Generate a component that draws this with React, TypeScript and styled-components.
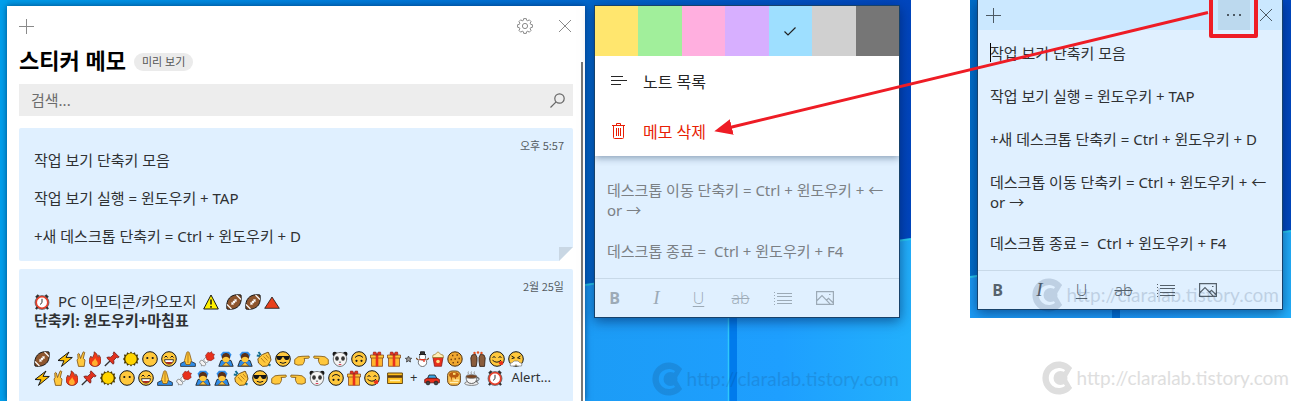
import React from "react";
import styled, { createGlobalStyle, css } from "styled-components";

const Global = createGlobalStyle`
  * { box-sizing: border-box; }
  body {
    margin: 0;
    background: #fff;
    font-family: "Noto Sans", "Noto Sans CJK KR", sans-serif;
    color: #2f3133;
  }
  p, h1 { margin: 0; }
  button, input { font: inherit; color: inherit; }
  svg { display: block; flex: none; }
`;

/* ---------- page ---------- */

const Page = styled.main`
  position: relative;
  display: flex;
  align-items: stretch;
  gap: 59px;
  padding-right: 10px;
  min-width: 1240px;
  overflow: hidden;
`;

const Desktop = styled.section<{ $wide?: boolean }>`
  position: relative;
  display: flex;
  align-items: flex-start;
  overflow: hidden;
  ${(p) =>
    p.$wide
      ? css`
          flex: 1 1 0;
          gap: 9px;
          padding: 6px 11px 0 7px;
        `
      : css`
          padding: 0 8px 8px 7px;
        `}
`;

const RightColumn = styled.div`
  flex: none;
  width: 321px;
  display: flex;
  flex-direction: column;
  gap: 43px;
`;

const Wall = styled.svg`
  position: absolute;
  inset: 0;
  width: 100%;
  height: 100%;
`;

/* ---------- note list window ---------- */

const ListWindow = styled.div`
  position: relative;
  flex: 1 1 0;
  height: 395px;
  overflow: hidden;
  padding: 0 12px;
  background: #fff;
  box-shadow: 0 0 6px rgba(0, 20, 60, 0.6);
`;

const TopBar = styled.div`
  display: flex;
  align-items: center;
  gap: 26px;
  height: 40px;
  padding-right: 2px;
  color: #8a8a8a;
`;

const IconButton = styled.button<{ $push?: boolean }>`
  display: flex;
  align-items: center;
  justify-content: center;
  padding: 0;
  border: 0;
  background: none;
  ${(p) => p.$push && "margin-left: auto;"}
`;

const TitleRow = styled.header`
  display: flex;
  align-items: center;
  gap: 8px;
  height: 28px;
`;

const Title = styled.h1`
  font-size: 22px;
  line-height: 28px;
  font-weight: 700;
  color: #000;
`;

const Pill = styled.span`
  margin-top: 4px;
  padding: 0 8px;
  border-radius: 9px;
  background: #ebebeb;
  color: #555;
  font-size: 11px;
  line-height: 18px;
`;

const Search = styled.label`
  display: flex;
  align-items: center;
  height: 32px;
  margin: 10px 0 12px;
  padding: 0 8px 0 12px;
  background: #ededed;
  color: #666;
`;

const SearchInput = styled.input`
  flex: 1;
  min-width: 0;
  padding: 0;
  border: 0;
  outline: 0;
  background: none;
  font-size: 15px;
  &::placeholder { color: #6c6c6c; opacity: 1; }
`;

const Card = styled.article`
  position: relative;
  height: 133px;
  margin-bottom: 8px;
  padding: 23px 15px;
  border-radius: 2px;
  background: #e0f0ff;
  font-size: 15px;
  line-height: 19px;
`;

const Stamp = styled.time`
  position: absolute;
  top: 8px;
  right: 9px;
  font-family: "Noto Sans CJK KR", sans-serif;
  font-size: 11px;
  line-height: 18px;
  color: #555c62;
`;

const Fold = styled.svg`
  position: absolute;
  right: 0;
  bottom: 0;
`;

const CardLine = styled.p`
  height: 19px;
  white-space: pre;
  & + & { margin-top: 19px; }
`;

const EmojiLine = styled.div<{ $bold?: boolean; $spaced?: boolean }>`
  display: flex;
  align-items: center;
  gap: 7px;
  height: 19px;
  white-space: pre;
  font-weight: ${(p) => (p.$bold ? 700 : 400)};
  ${(p) => p.$spaced && "margin-top: 19px;"}
`;

const EmojiRun = styled.span`
  display: flex;
  align-items: center;
  gap: 3px;
`;

const Preview = styled.span`
  font-size: 13px;
`;

const Thumb = styled.div`
  position: absolute;
  top: 56px;
  right: 2px;
  bottom: 0;
  width: 2px;
  background: #777;
`;

/* ---------- sticky note ---------- */

const Note = styled.article<{ $top?: boolean }>`
  position: relative;
  flex: none;
  width: 306px;
  border: 1px solid #17426b;
  background: #e0f0ff;
  box-shadow: 0 3px 12px rgba(0, 20, 70, 0.55);
  ${(p) => (p.$top ? "border-top: 0;" : "margin-top: -1px;")}
`;

const Swatches = styled.div`
  display: flex;
  height: 50px;
`;

const Swatch = styled.button<{ $color: string }>`
  flex: 1;
  display: flex;
  align-items: center;
  justify-content: center;
  padding: 0;
  border: 0;
  background: ${(p) => p.$color};
`;

const Menu = styled.div`
  position: relative;
  background: #fff;
  box-shadow: 0 2px 7px rgba(30, 60, 90, 0.45);
  clip-path: inset(0 0 -12px 0);
`;

const MenuItem = styled.button<{ $danger?: boolean }>`
  display: flex;
  align-items: center;
  gap: 16px;
  width: 100%;
  height: 50px;
  padding: 0 16px;
  border: 0;
  background: none;
  font-size: 16px;
  color: ${(p) => (p.$danger ? "#e81e05" : "#262626")};
`;

const NoteHeader = styled.header`
  display: flex;
  align-items: center;
  height: 30px;
  padding: 0 10px 0 8px;
  background: #cbe8ff;
  color: #4d5a64;
`;

const MoreButton = styled(IconButton)`
  position: relative;
  width: 32px;
  height: 30px;
  margin: 0 10px 0 auto;
  background: #bcd9ee;
`;

const Highlight = styled.span`
  position: absolute;
  inset: -5px -8px -8px -9px;
  border: 4px solid #ee1c25;
  border-radius: 2px;
`;

const NoteBody = styled.div<{ $dim?: boolean }>`
  position: relative;
  display: flex;
  flex-direction: column;
  gap: 23px;
  padding: ${(p) => (p.$dim ? "24px 12px 17px" : "13px 12px 17px")};
  font-size: 15px;
  line-height: 20px;
  color: ${(p) => (p.$dim ? "#7b8085" : "#2f3133")};
`;

const Para = styled.p<{ $long?: boolean }>`
  white-space: pre;
  margin-bottom: ${(p) => (p.$long ? "-2px" : "0")};
`;

const Caret = styled.i`
  position: absolute;
  left: 12px;
  top: 13px;
  width: 1px;
  height: 19px;
  background: #000;
`;

const Tools = styled.footer<{ $dim?: boolean }>`
  display: flex;
  height: 39px;
  border-top: 1px solid #c8d9e8;
  color: ${(p) => (p.$dim ? "#9caab6" : "#56626c")};
`;

const Tool = styled.button<{ $kind?: "b" | "i" | "u" | "s" }>`
  display: flex;
  align-items: center;
  justify-content: center;
  width: 42px;
  padding: 0 3px 0 0;
  border: 0;
  background: none;
  font-family: "Open Sans", sans-serif;
  font-size: 16px;
  line-height: 20px;
  ${(p) => p.$kind === "b" && `font-weight: 700;`}
  ${(p) => p.$kind === "i" && `font-style: italic; font-family: "Liberation Serif", serif; font-size: 19px;`}
  ${(p) => p.$kind === "u" && `font-weight: 300; text-decoration: underline 1px; text-underline-offset: 2px;`}
  ${(p) => p.$kind === "s" && `font-weight: 300; text-decoration: line-through 1px;`}
`;

/* ---------- overlays ---------- */

const MarkBox = styled.div<{ $at?: "desktop" | "note"; $light?: boolean }>`
  display: flex;
  align-items: center;
  gap: 2px;
  height: 34px;
  pointer-events: none;
  font-family: Lato, sans-serif;
  font-size: 19px;
  line-height: 34px;
  white-space: nowrap;
  color: ${(p) => (p.$light ? "#dedede" : "#14325a")};
  opacity: ${(p) => (p.$light ? 1 : 0.16)};
  ${(p) => p.$at === "desktop" && "position: absolute; right: 12px; bottom: 5px;"}
  ${(p) => p.$at === "note" && "position: absolute; right: 12px; bottom: 6px;"}
  ${(p) => p.$light && "align-self: flex-end; margin-right: 2px;"}
`;

const ArrowLayer = styled.svg`
  position: absolute;
  inset: 0;
  width: 100%;
  height: 100%;
  pointer-events: none;
`;

/* ---------- icons ---------- */

const PlusIcon = () => (
  <svg width="15" height="15" viewBox="0 0 15 15" stroke="currentColor" fill="none">
    <path d="M0 7.5h15M7.5 0v15" />
  </svg>
);

const CloseIcon = () => (
  <svg width="12" height="12" viewBox="0 0 12 12" stroke="currentColor" fill="none">
    <path d="M0 0l12 12M12 0L0 12" />
  </svg>
);

const GearIcon = () => (
  <svg width="16" height="16" viewBox="0 0 16 16" stroke="currentColor" fill="none" strokeLinejoin="round">
    <circle cx="8" cy="8" r="2.6" />
    <path d="M6.7.6h2.6l.3 1.700 1.200.5 1.500-1 1.800 1.900-1 1.400.5 1.200 1.800.4v2.600l-1.800.4-.5 1.200 1 1.400-1.800 1.900-1.500-1-1.200.5-.3 1.700H6.700l-.3-1.700-1.200-.5-1.500 1-1.800-1.900 1-1.400-.5-1.200L.6 9.300V6.700l1.800-.4.5-1.200-1-1.400 1.800-1.900 1.500 1 1.200-.5z" />
  </svg>
);

const SearchIcon = () => (
  <svg width="15" height="15" viewBox="0 0 15 15" stroke="currentColor" fill="none" strokeWidth="1.2">
    <circle cx="9.500" cy="5.500" r="4.700" />
    <path d="M6.100 8.900L.5 14.500" />
  </svg>
);

const CheckIcon = () => (
  <svg width="12" height="9" viewBox="0 0 12 9" stroke="#222" fill="none" strokeWidth="1.2">
    <path d="M.5 4.500L4 8 11.500.5" />
  </svg>
);

const LinesIcon = () => (
  <svg width="16" height="10" viewBox="0 0 16 10" stroke="currentColor" fill="none">
    <path d="M0 .5h12M0 4.500h16M0 8.500h10" />
  </svg>
);

const TrashIcon = () => (
  <svg width="16" height="16" viewBox="0 0 16 16" stroke="currentColor" fill="none">
    <path d="M1 2.500h13M5.500 2.500v-2h4v2M2.500 2.500v12q0 1 1 1h8q1 0 1-1v-12M5.500 5v8M7.500 5v8M9.500 5v8" />
  </svg>
);

const DotsIcon = () => (
  <svg width="14" height="2" viewBox="0 0 14 2" fill="currentColor">
    <path d="M0 0h2v2H0zM6 0h2v2H6zM12 0h2v2h-2z" />
  </svg>
);

const ListIcon = () => (
  <svg width="18" height="13" viewBox="0 0 18 13" stroke="currentColor" fill="none">
    <path d="M3 1.500h15M3 4.500h15M3 8.500h15M3 11.500h15" />
    <path d="M0 .5h1M0 3.500h1M0 6.500h1M0 9.500h1M0 12.500h1" />
  </svg>
);

const ImageIcon = () => (
  <svg width="18" height="14" viewBox="0 0 18 14" stroke="currentColor" fill="none" strokeWidth="1.2">
    <path d="M.6.6h16.800v12.800H.6zM.6 10L6 4.600l8.500 8.800M10.500 9.200l2-1.900 4.900 4.700" />
    <path d="M13 3.500h1.500" />
  </svg>
);

/* ---------- emoji ---------- */

const K = "#161616";
const Y = "#ffc83d";

const Face = ({ children }: { children: React.ReactNode }) => (
  <>
    <circle cx="8" cy="8" r="7.300" fill={Y} stroke={K} />
    {children}
  </>
);

const Bow = () => (
  <>
    <path d="M2.500 3.500L5 .8h6l2.500 2.700L12 7H4z" fill="#2f8be6" />
    <path d="M.8 15.300L3 9.500Q8 7 13 9.500l2.200 5.800z" fill="#2f8be6" stroke={K} strokeWidth=".8" />
    <circle cx="8" cy="7.500" r="3.700" fill={Y} />
    <path d="M4.100 8C3.300 4 5.500 2 8 2s4.700 2 3.900 6Q10 5.800 8 5.800T4.100 8z" fill="#5a3018" />
    <path d="M4.500 14.800L8 11.200l3.500 3.600z" fill={Y} stroke="#8a5000" strokeWidth=".7" />
  </>
);

const HAND =
  "M.7 8.500L4 5.800l4-.5 7-.2q1 1.200-.3 2.100L10 7.500l.7 1.500-.4 1.700-.8 1.800-1 1.300-4.500.4L.7 13z";

type Art = { w: number; art: React.ReactNode };

const EMOJI: Record<string, Art> = {
  clock: {
    w: 17,
    art: (
      <>
        <path d="M2 3.500L4.500 1M14 3.500L11.500 1M3.500 13L2 15.200M12.500 13l1.500 2.200" stroke="#333" strokeWidth="2.200" />
        <circle cx="8" cy="8.500" r="5.900" fill="#fff" stroke="#e8402c" strokeWidth="1.900" />
        <circle cx="8" cy="8.500" r="7" fill="none" stroke={K} strokeWidth=".5" />
        <path d="M8 4.800v3.900l-2 1.800" stroke="#333" fill="none" />
      </>
    ),
  },
  warning: {
    w: 16,
    art: (
      <>
        <path d="M8 1L15.300 15H.7z" fill="#fff100" stroke={K} strokeLinejoin="round" />
        <path d="M8 5.500v5M8 12v1.800" stroke={K} strokeWidth="1.500" />
      </>
    ),
  },
  football: {
    w: 16,
    art: (
      <>
        <path d="M1 15C0 9 2 4 6 2c3-1.500 6-1.500 9-1 .5 4 .3 7-1.500 10C11 14.500 6 16 1 15z" fill="#8e562e" stroke={K} />
        <path d="M1 10.500L5.500 15M10.500 1L15 5.500M5.500 10.500l5-5M5.500 8.500l2 2M7 7l2 2M8.500 5.500l2 2" stroke="#fff" strokeWidth="1.100" />
      </>
    ),
  },
  triangle: { w: 16, art: <path d="M8 3L15.300 14.300H.7z" fill="#e8401c" stroke={K} strokeWidth=".8" /> },
  zap: { w: 16, art: <path d="M12 1L1 9.500l6 .3L4.500 15.400 15.300 6.500 9 6.300z" fill="#ffc000" stroke={K} strokeLinejoin="round" /> },
  victory: {
    w: 10,
    art: (
      <path
        transform="translate(-3 0)"
        d="M5.500 15.400L4 9l1-1.300L4.800 3q.8-1.200 1.600 0L7.500 7.500 10 1.200q1.300-.8 1.700.3L10.300 7.500 12 9l-.8 6.400z"
        fill={Y}
        stroke="#7a4d10"
        strokeWidth=".8"
      />
    ),
  },
  fire: {
    w: 12,
    art: (
      <g transform="translate(-2 0)">
        <path d="M7 .8c4 2 3 4.200 4.300 5.400.6-.6.6-1.400.4-2.300 2.300 2.500 2.500 4.500 2.300 6.600-.4 3-2.800 5-6 5s-5.600-2-6-5c-.1-2.500 1.200-4.200 2-5.500.2 1 .5 1.500 1 2C6.500 5 7.500 3 7 .8z" fill="#f03a17" stroke="#5a1a10" strokeWidth=".6" />
        <path d="M8.200 7c0 2 2.600 3 2.600 5.200 0 1.800-1.200 2.800-2.800 2.800s-3-1-3-2.800C5 10 7.500 9.500 8.200 7z" fill="#ffb030" />
      </g>
    ),
  },
  pin: {
    w: 16,
    art: (
      <>
        <path d="M6 10L.8 15" stroke="#333" strokeWidth="1.300" />
        <path d="M10 .8L15.200 6l-1.500.8-1.200-.3L9.800 9.200l.2 3.200-1 .8L2.800 7l.8-1 3.200.2 2.700-2.700-.3-1.200z" fill="#e0301e" stroke="#5b1310" strokeWidth=".7" />
      </>
    ),
  },
  sun: {
    w: 16,
    art: (
      <>
        <path d="M8 .5l1.700 2 2.200-1.300.7 2.500 2.500-.1-.6 2.500L16 8l-1.500 1.900.6 2.500-2.500-.1-.7 2.500-2.200-1.300L8 15.500l-1.700-2-2.200 1.300-.7-2.500-2.500.1.6-2.500L0 8l1.500-1.900-.6-2.500 2.500.1.700-2.500 2.200 1.300z" fill="#4a3a00" />
        <circle cx="8" cy="8" r="5.700" fill="#ffd500" />
      </>
    ),
  },
  mute: {
    w: 16,
    art: (
      <Face>
        <circle cx="5.300" cy="7" r="1.100" fill={K} />
        <circle cx="10.700" cy="7" r="1.100" fill={K} />
      </Face>
    ),
  },
  laugh: {
    w: 16,
    art: (
      <Face>
        <path d="M3.500 6.500L5 5l1.500 1.500M9.500 6.500L11 5l1.500 1.500" stroke={K} fill="none" />
        <path d="M3.500 8.700h9c-.3 2.800-2 4.300-4.500 4.300s-4.200-1.500-4.500-4.300z" fill="#fff" stroke={K} strokeWidth=".8" />
        <path d="M4.500 11h7c-1 1.500-2 2-3.500 2s-2.700-.5-3.500-2z" fill="#b02a1a" />
      </Face>
    ),
  },
  pray: {
    w: 16,
    art: (
      <>
        <path d="M.6 15.400V12.500L4.500 10.500h7l3.900 2v2.900z" fill="#2f8be6" stroke={K} strokeWidth=".7" />
        <path d="M7.900.8q-1.300 0-1.500 1.700L4.500 9.500 6 13.500h4l1.500-4-1.900-7Q9.400.8 7.900.8z" fill={Y} stroke="#8a5a10" strokeWidth=".8" />
        <path d="M8 2v10" stroke="#a86c10" strokeWidth=".8" />
      </>
    ),
  },
  cracker: {
    w: 16,
    art: (
      <>
        <path d="M1 10l2-1 4 4-1.500 2-1.800-.5L2.500 15l-.3-2L.6 12z" fill="#f3f3f3" stroke="#777" strokeWidth=".7" />
        <path d="M4.500 9l5-6 3.500 3.500L7.500 12z" fill="#fff" stroke="#555" strokeWidth=".6" />
        <path d="M6.500 4.500L9 1.200l2 .8L12.500.6l.8 2 2.300.8L14.500 5l.7 2.500-3.200 2.200L8 9z" fill="#e8301c" stroke="#7a1010" strokeWidth=".5" />
      </>
    ),
  },
  bow: { w: 16, art: <Bow /> },
  clap: {
    w: 16,
    art: (
      <>
        <path d="M.8 4.500L4 5M2.500 1l2.300 3M14.500 14.500l-3-1.500" stroke="#136f91" strokeWidth="2" />
        <path d="M4.500 5l2-1.500L12 1.200q1.500.5.8 1.800l1.200 1.500L15 9l-3.500 6-5 .4L2.500 12 1.800 8z" fill={Y} stroke="#6e4812" strokeWidth=".9" />
        <path d="M5 7l4 4.500M7.500 5.500l4 4M10 4l3 3.500" stroke="#a86c10" strokeWidth=".8" />
      </>
    ),
  },
  cool: {
    w: 16,
    art: (
      <Face>
        <path d="M1.200 5h13.600l-.6 2.500q-.5 1.500-2.300 1.500-2.500 0-3-2.800H7.100Q6.600 9 4.100 9 2.300 9 1.800 7.500z" fill={K} />
        <path d="M4.800 11.300q3.200 2 6.400 0" stroke={K} fill="none" />
      </Face>
    ),
  },
  right: { w: 16, art: <path d={HAND} fill={Y} stroke="#7a5210" strokeWidth=".8" /> },
  left: {
    w: 16,
    art: <path transform="matrix(-1 0 0 1 16 0)" d={HAND} fill={Y} stroke="#7a5210" strokeWidth=".8" />,
  },
  panda: {
    w: 16,
    art: (
      <>
        <circle cx="2.800" cy="3" r="2.300" fill={K} />
        <circle cx="13.200" cy="3" r="2.300" fill={K} />
        <path d="M8 1.500c4.500 0 6.700 3 6.700 6.500S12 15.400 8 15.400 1.300 11.500 1.300 8 3.500 1.500 8 1.500z" fill="#f4f4f4" stroke="#555" strokeWidth=".8" />
        <ellipse cx="5" cy="7.500" rx="1.800" ry="2.200" fill="#333" />
        <ellipse cx="11" cy="7.500" rx="1.800" ry="2.200" fill="#333" />
        <path d="M6.800 10.800h2.400L8 12z" fill={K} />
        <path d="M6.700 13.500h2.600" stroke="#e0405a" />
      </>
    ),
  },
  upside: {
    w: 16,
    art: (
      <Face>
        <circle cx="5.500" cy="9.800" r="1.100" fill={K} />
        <circle cx="10.500" cy="9.800" r="1.100" fill={K} />
        <path d="M4 6.500q4-4 8 0" stroke={K} fill="none" />
      </Face>
    ),
  },
  gift: {
    w: 14,
    art: (
      <g transform="translate(-1 0)">
        <path d="M2.500 6.500h11v8.800h-11z" fill="#ffb52e" stroke="#7a3a10" strokeWidth=".7" />
        <path d="M1.500 4h13v3h-13z" fill="#ffc83d" stroke="#7a3a10" strokeWidth=".7" />
        <path d="M6.700 4h2.600v11.300H6.700z" fill="#e8301c" />
        <path d="M8 4L4 3.500 4.500 1 7 1.200zM8 4l4-.5-.5-2.500L9 1.200z" fill="#e8301c" stroke="#8c1a10" strokeWidth=".6" />
      </g>
    ),
  },
  star: {
    w: 9,
    art: <path transform="translate(-3.500 0)" d="M8 5l.9 2.100 2.300.2-1.700 1.500.5 2.200L8 9.800 6 11l.5-2.200-1.700-1.500 2.300-.2z" fill="#999" stroke="#444" strokeWidth=".9" />,
  },
  snowman: {
    w: 13,
    art: (
      <g transform="translate(-1.500 0)">
        <path d="M1 7l3 2M15 7l-3 2" stroke="#7a4a20" strokeWidth="1.200" />
        <circle cx="8" cy="11.300" r="4.200" fill="#fff" stroke="#555" strokeWidth=".8" />
        <circle cx="8" cy="6" r="3.200" fill="#fff" stroke="#555" strokeWidth=".8" />
        <path d="M4.500 3.500h7M6 .8h4v2.700H6z" fill="#333" stroke="#222" />
        <path d="M5 8.600h6M9.500 8.600v2.500" stroke="#e8301c" strokeWidth="1.300" />
      </g>
    ),
  },
  popcorn: {
    w: 12,
    art: (
      <g transform="translate(-2 0)">
        <path d="M3 6.500L4.500 15.300h7L13 6.500z" fill="#e8301c" stroke="#7a1010" strokeWidth=".7" />
        <path d="M2.500 6.500L3 4l2-.5L8 .8l3 2.700 2 .5.5 2.500z" fill="#fff0b8" stroke="#9a7420" strokeWidth=".7" />
        <circle cx="8" cy="10.500" r="1.800" fill="#ffe08a" />
      </g>
    ),
  },
  cookie: {
    w: 16,
    art: (
      <>
        <circle cx="8" cy="8" r="7.200" fill="#f0a830" stroke="#4a2c08" />
        <path d="M5 4.500h1.400M9.500 4h1.400M3.500 8.500h1.400M7.500 8h1.400M11.500 7.500h1.400M5.500 11.800h1.400M10 11.200h1.400" stroke="#6a3a0c" strokeWidth="1.400" />
      </>
    ),
  },
  hands: {
    w: 16,
    art: (
      <>
        <path d="M1.500 15.400L.8 7 2 4l3.500-.8L7 6.500V10l-.8 5.400zM14.500 15.400l.7-8.400L14 4l-3.500-.8L9 6.500V10l.8 5.400z" fill="#8a5c3c" stroke="#2c1a10" strokeWidth=".8" />
        <circle cx="4.500" cy="2" r="1.200" fill="#e8501c" />
        <circle cx="8" cy="1.500" r="1.200" fill="#e8501c" />
        <circle cx="11.500" cy="2" r="1.200" fill="#e8501c" />
      </>
    ),
  },
  yum: {
    w: 16,
    art: (
      <Face>
        <path d="M3.500 6.500Q5 4.800 6.500 6.500M9.500 6.500q1.500-1.700 3 0M3.500 9.200q4.500 4 8.500 0" stroke={K} fill="none" />
        <path d="M9.500 11.500l3.200-1.800q2.300 1.500 1.200 3.800-2.200 1.200-3.600-.3z" fill="#e8301c" />
      </Face>
    ),
  },
  steam: {
    w: 16,
    art: (
      <Face>
        <path d="M3.500 5l3 1.800-2.800.8M12.500 5l-3 1.800 2.800.8" stroke={K} fill="none" />
        <path d="M6 10h4l1.500 1.500 2.500 1L13.500 15H9.200L8 13.500 6.800 15H2.500L2 12.500l2.500-1z" fill="#fff" stroke="#777" strokeWidth=".7" />
      </Face>
    ),
  },
  card: {
    w: 16,
    art: (
      <>
        <path d="M.6 3h14.800v10.500H.6z" fill="#ffc020" stroke="#6a4a10" />
        <path d="M1 5.200h14v2.600H1z" fill="#5a3a14" />
        <path d="M3 10.500h10" stroke="#fff0b0" strokeWidth="1.500" />
      </>
    ),
  },
  car: {
    w: 16,
    art: (
      <>
        <path d="M3.500 8.500L5 5h6l2 3.500z" fill="#38a8e8" stroke={K} strokeWidth=".8" />
        <path d="M.7 12.800V9.500L3 8.200h10l2.400 1.300v3.300z" fill="#e8301c" stroke="#6a1010" strokeWidth=".8" />
        <circle cx="4" cy="13" r="1.900" fill="#444" stroke={K} strokeWidth=".6" />
        <circle cx="12" cy="13" r="1.900" fill="#444" stroke={K} strokeWidth=".6" />
      </>
    ),
  },
  pancake: {
    w: 14,
    art: (
      <g transform="translate(-1 0)">
        <rect x="1.600" y="1" width="12.800" height="14.300" rx="4.500" fill="#f8c050" stroke="#5a3208" strokeWidth=".9" />
        <path d="M3 5q0-3 5-3t5 3q-1 2.500-3 2.500V10L8.500 7.500H6v4L4.500 7Q3 6.500 3 5z" fill="#b85a10" />
        <path d="M4 12.500h8M7.500 10.200H13" stroke="#fff0b8" strokeWidth="1.200" />
        <path d="M7 2.800h2.500v2H7z" fill="#ffe070" />
      </g>
    ),
  },
  coffee: {
    w: 16,
    art: (
      <>
        <ellipse cx="7.500" cy="13.300" rx="6.800" ry="2.100" fill="#eee" stroke="#666" strokeWidth=".8" />
        <path d="M2 6.500h11q0 7-5.500 7T2 6.500z" fill="#f6f6f6" stroke="#555" strokeWidth=".9" />
        <path d="M13 7.500q2.500 0 2 1.800T12 11.500" fill="none" stroke="#555" />
        <ellipse cx="7.500" cy="6.500" rx="5.500" ry="1.800" fill="#7a4420" stroke="#666" strokeWidth=".8" />
        <path d="M4.500 4q-1-1 0-2.500M7.500 4q-1-1 0-2.500M10.500 4q-1-1 0-2.500" stroke="#999" fill="none" />
      </>
    ),
  },
};

const Emoji = ({ name }: { name: string }) => {
  const { w, art } = EMOJI[name];
  return (
    <svg width={w} height="16" viewBox={`0 0 ${w} 16`} fill="none" role="img" aria-label={name}>
      {art}
    </svg>
  );
};

const Run = ({ names }: { names: string }) => (
  <EmojiRun>
    {names.split(" ").map((n, i) => (
      <Emoji key={i} name={n} />
    ))}
  </EmojiRun>
);

/* ---------- shared pieces ---------- */

const Watermark = (props: { $at?: "desktop" | "note"; $light?: boolean }) => (
  <MarkBox {...props}>
    <svg width="33" height="34" viewBox="0 0 33 34" fill="none" stroke="currentColor">
      <path d="M27.500 9A13.300 13.300 0 1 0 27.500 25" strokeWidth="6.400" />
      <circle cx="18.500" cy="17" r="7" fill="currentColor" stroke="none" />
      <path d="M21 12l4-5.500 5 .5-5.500 9.500zM21 22l4 5.500 5-.5-5.500-9.500z" fill="currentColor" stroke="none" />
    </svg>
    http://claralab.tistory.com
  </MarkBox>
);

const Formatting = ({ dim }: { dim?: boolean }) => (
  <Tools $dim={dim}>
    <Tool $kind="b" aria-label="굵게">B</Tool>
    <Tool $kind="i" aria-label="기울임꼴">I</Tool>
    <Tool $kind="u" aria-label="밑줄">U</Tool>
    <Tool $kind="s" aria-label="취소선">ab</Tool>
    <Tool aria-label="글머리 기호"><ListIcon /></Tool>
    <Tool aria-label="이미지 추가"><ImageIcon /></Tool>
  </Tools>
);

const SWATCHES = [
  ["노랑", "#ffe66e"],
  ["초록", "#a1ef9b"],
  ["분홍", "#ffafdf"],
  ["보라", "#d7afff"],
  ["파랑", "#9edfff"],
  ["회색", "#d0d0d0"],
  ["진회색", "#767676"],
];

export default function App() {
  return (
    <>
      <Global />
      <Page>
        <Desktop $wide>
          <Wall viewBox="0 0 911 401" preserveAspectRatio="none">
            <defs>
              <linearGradient id="sky" x1="0" x2="1" y1="0" y2="0">
                <stop offset="0" stopColor="#009ce8" />
                <stop offset="0.35" stopColor="#007fdc" />
                <stop offset="0.65" stopColor="#0067cd" />
                <stop offset="1" stopColor="#0046be" />
              </linearGradient>
              <linearGradient id="floor" x1="0" x2="1" y1="0" y2="0">
                <stop offset="0" stopColor="#1c9cf6" />
                <stop offset="0.6" stopColor="#1e9fff" />
                <stop offset="1" stopColor="#22b0fc" />
              </linearGradient>
            </defs>
            <path d="M0 0h911v401H0z" fill="url(#sky)" />
            <path d="M0 0h7v401H0z" fill="#009fec" />
            <path d="M585 285L911 239V401H585z" fill="url(#floor)" />
            <path d="M585 285L911 239" stroke="#28cdf2" strokeWidth="2" />
            <path d="M729 300h8v101h-8z" fill="#007bec" />
            <path d="M728.500 300v101" stroke="#2fc8fa" strokeWidth="1.500" />
          </Wall>
          <ListWindow>
            <TopBar>
              <IconButton aria-label="새 메모"><PlusIcon /></IconButton>
              <IconButton $push aria-label="설정"><GearIcon /></IconButton>
              <IconButton aria-label="닫기"><CloseIcon /></IconButton>
            </TopBar>
            <TitleRow>
              <Title>스티커 메모</Title>
              <Pill>미리 보기</Pill>
            </TitleRow>
            <Search>
              <SearchInput type="text" placeholder="검색..." aria-label="검색" />
              <SearchIcon />
            </Search>
            <Card>
              <Stamp>오후 5:57</Stamp>
              <CardLine>작업 보기 단축키 모음</CardLine>
              <CardLine>작업 보기 실행 = 윈도우키 + TAP</CardLine>
              <CardLine>+새 데스크톱 단축키 = Ctrl + 윈도우키 + D</CardLine>
              <Fold width="14" height="14" viewBox="0 0 14 14">
                <path d="M0 14L14 0v14z" fill="#fff" />
                <path d="M0 0h14L0 14z" fill="#c9d7e4" />
              </Fold>
            </Card>
            <Card>
              <Stamp>2월 25일</Stamp>
              <EmojiLine>
                <Emoji name="clock" />
                <span>PC 이모티콘/카오모지</span>
                <Emoji name="warning" />
                <Run names="football football triangle" />
              </EmojiLine>
              <EmojiLine $bold>단축키: 윈도우키+마침표</EmojiLine>
              <EmojiLine $spaced>
                <Emoji name="football" />
                <Run names="zap victory fire pin sun mute laugh pray cracker bow bow clap cool right left panda upside gift gift star snowman popcorn cookie" />
                <Run names="hands yum steam" />
              </EmojiLine>
              <EmojiLine>
                <Run names="zap victory fire pin sun mute laugh pray cracker bow bow clap cool right left panda upside gift yum" />
                <Emoji name="card" />
                <Preview>+</Preview>
                <Emoji name="car" />
                <Run names="pancake coffee" />
                <Emoji name="clock" />
                <Preview>Alert...</Preview>
              </EmojiLine>
            </Card>
            <Thumb />
          </ListWindow>
          <Note>
            <Menu>
              <Swatches>
                {SWATCHES.map(([name, color]) => (
                  <Swatch key={name} $color={color} aria-label={name}>
                    {name === "파랑" && <CheckIcon />}
                  </Swatch>
                ))}
              </Swatches>
              <MenuItem><LinesIcon />노트 목록</MenuItem>
              <MenuItem $danger><TrashIcon />메모 삭제</MenuItem>
            </Menu>
            <NoteBody $dim>
              <Para $long>데스크톱 이동 단축키 = Ctrl + 윈도우키 + ←<br />or →</Para>
              <Para>데스크톱 종료 =  Ctrl + 윈도우키 + F4</Para>
            </NoteBody>
            <Formatting dim />
          </Note>
          <Watermark $at="desktop" />
        </Desktop>
        <RightColumn>
          <Desktop>
            <Wall viewBox="0 0 321 318" preserveAspectRatio="none">
              <defs>
                <linearGradient id="side" x1="0" x2="1" y1="0" y2="0">
                  <stop offset="0" stopColor="#0070cc" />
                  <stop offset="1" stopColor="#0048c0" />
                </linearGradient>
              </defs>
              <path d="M0 0h321v318H0z" fill="url(#side)" />
              <path d="M0 277L321 231V318H0z" fill="url(#floor)" />
              <path d="M0 277L321 231" stroke="#28cdf2" strokeWidth="2" />
              <path d="M142 300h8v18h-8z" fill="#0072d8" />
            </Wall>
            <Note $top>
              <NoteHeader>
                <IconButton aria-label="새 메모"><PlusIcon /></IconButton>
                <MoreButton aria-label="메뉴">
                  <DotsIcon />
                  <Highlight />
                </MoreButton>
                <IconButton aria-label="닫기"><CloseIcon /></IconButton>
              </NoteHeader>
              <NoteBody>
                <Caret />
                <Para>작업 보기 단축키 모음</Para>
                <Para>작업 보기 실행 = 윈도우키 + TAP</Para>
                <Para>+새 데스크톱 단축키 = Ctrl + 윈도우키 + D</Para>
                <Para $long>데스크톱 이동 단축키 = Ctrl + 윈도우키 + ←<br />or →</Para>
                <Para>데스크톱 종료 =  Ctrl + 윈도우키 + F4</Para>
              </NoteBody>
              <Formatting />
            </Note>
            <Watermark $at="note" />
          </Desktop>
          <Watermark $light />
        </RightColumn>
        <ArrowLayer>
          <defs>
            <marker id="head" markerUnits="userSpaceOnUse" markerWidth="20" markerHeight="18" refX="2" refY="8" orient="auto-start-reverse">
              <path d="M18 8L0 0v16z" fill="#ee1c25" />
            </marker>
          </defs>
          <line x1="92.850%" y1="12.500" x2="56.100%" y2="127.500" stroke="#ee1c25" strokeWidth="3" markerEnd="url(#head)" />
        </ArrowLayer>
      </Page>
    </>
  );
}
